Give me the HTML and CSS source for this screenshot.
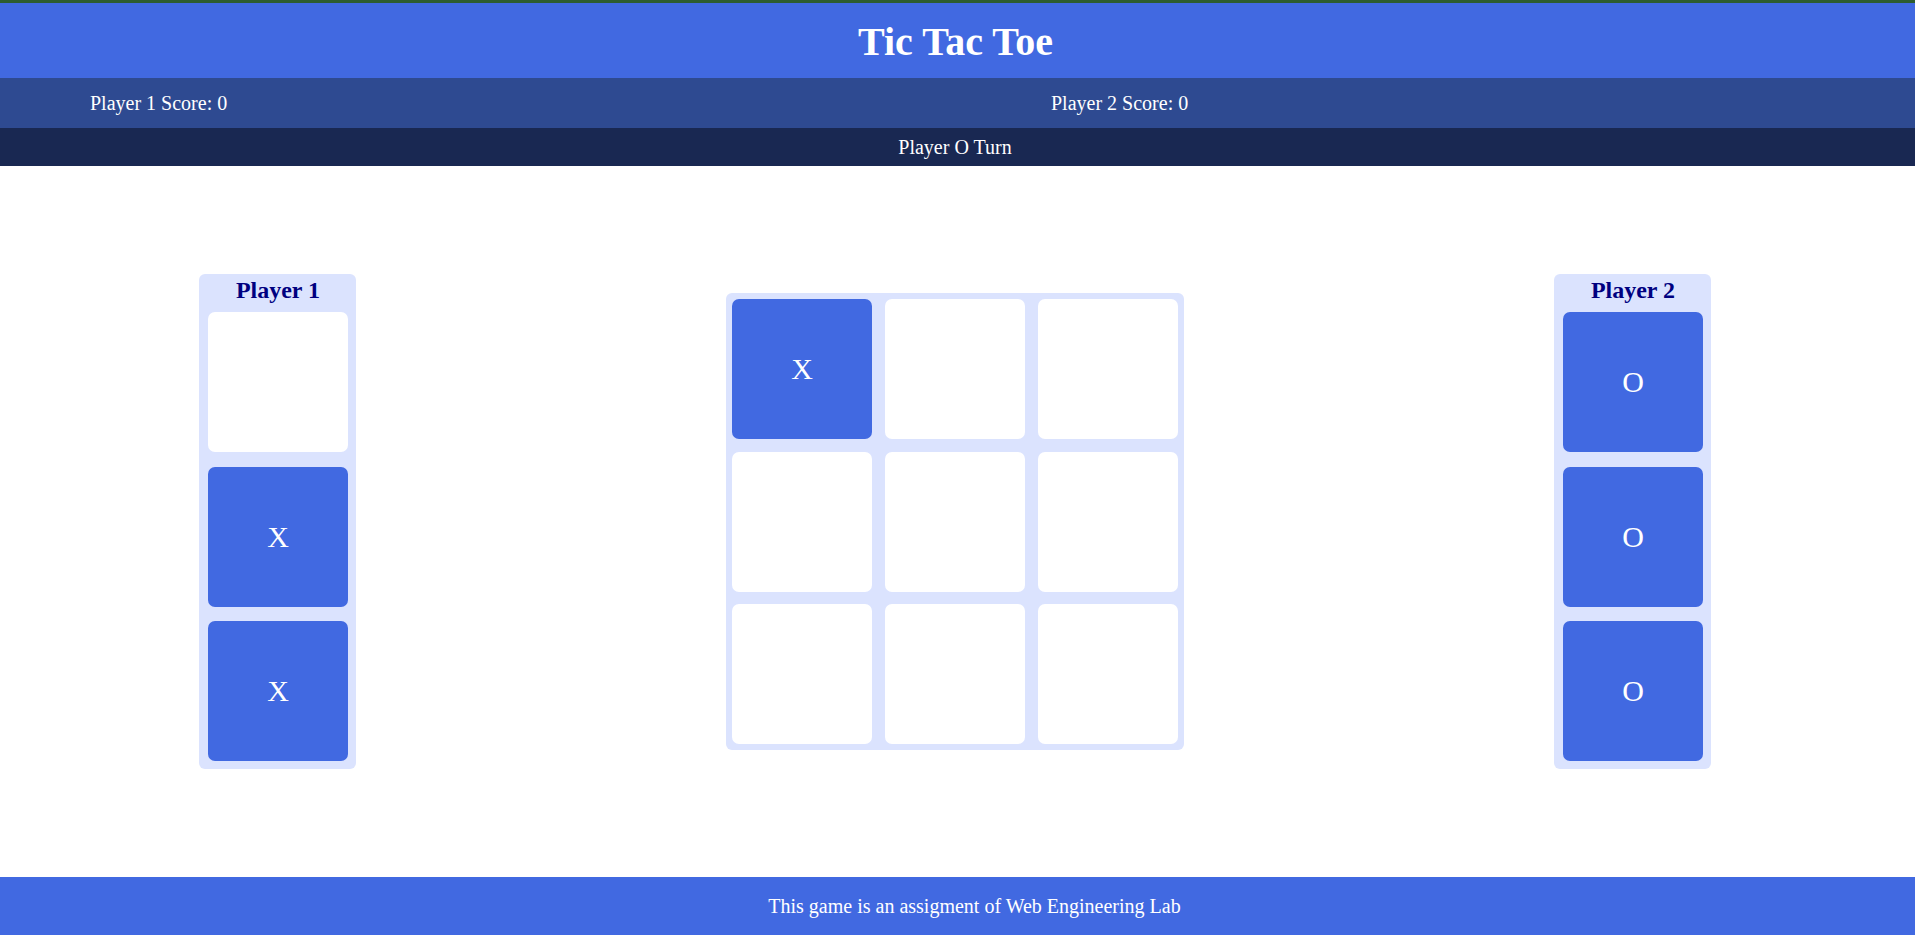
FILE: index.html
```html
<!DOCTYPE html>
<html lang="en">
<head>
<meta charset="utf-8">
<title>Tic Tac Toe</title>
<link rel="stylesheet" href="styles.css">
</head>
<body>
<header class="top">
  <h1 class="title">Tic Tac Toe</h1>
</header>
<div class="scores">
  <span class="score">Player 1 Score: 0</span>
  <span class="score">Player 2 Score: 0</span>
</div>
<div class="turn">Player O Turn</div>
<main class="arena">
  <section class="panel">
    <h2 class="panel-title">Player 1</h2>
    <div class="piece"></div>
    <div class="piece filled">X</div>
    <div class="piece filled">X</div>
  </section>
  <section class="board">
    <div class="cell filled">X</div>
    <div class="cell"></div>
    <div class="cell"></div>
    <div class="cell"></div>
    <div class="cell"></div>
    <div class="cell"></div>
    <div class="cell"></div>
    <div class="cell"></div>
    <div class="cell"></div>
  </section>
  <section class="panel">
    <h2 class="panel-title">Player 2</h2>
    <div class="piece filled">O</div>
    <div class="piece filled">O</div>
    <div class="piece filled">O</div>
  </section>
</main>
<footer class="foot">This game is an assigment of Web Engineering Lab</footer>
</body>
</html>
```
FILE: styles.css
```css
* { box-sizing: border-box; }
html, body { margin: 0; padding: 0; }
body {
  font-family: "Liberation Serif", "Times New Roman", serif;
  color: #fff;
  background: #fff;
  min-height: 100vh;
  display: flex;
  flex-direction: column;
}
.top {
  background: #4169e1;
  border-top: 3px solid #2d5d2f;
  height: 78px;
  display: flex;
  align-items: center;
  justify-content: center;
  padding-right: 4px;
}
.title {
  margin: 0;
  font-size: 40px;
  font-weight: bold;
  line-height: 75px;
  padding-top: 2px;
}
.scores {
  background: #2e4a91;
  height: 50px;
  display: grid;
  grid-template-columns: 961px 1fr;
  align-items: center;
  padding-left: 90px;
  font-size: 20px;
}
.turn {
  background: #192852;
  height: 38px;
  line-height: 38px;
  text-align: center;
  font-size: 20px;
  padding-right: 5px;
}
.arena {
  flex: 1;
  display: flex;
  align-items: center;
  gap: 370px;
  padding-left: 199px;
}
.panel {
  width: 157px;
  background: #dbe3fe;
  border-radius: 6px;
  padding: 0 8px 8px 9px;
  display: flex;
  flex-direction: column;
  gap: 14.5px;
}
.panel-title {
  margin: 0 0 -7px;
  padding-top: 1px;
  font-size: 24px;
  line-height: 30px;
  font-weight: bold;
  color: #000080;
  text-align: center;
}
.piece, .cell {
  width: 140px;
  height: 140px;
  background: #fff;
  border-radius: 7px;
  display: flex;
  align-items: center;
  justify-content: center;
  font-size: 30px;
  color: #fff;
}
.filled { background: #4169e1; }
.board {
  background: #dbe3fe;
  border-radius: 6px;
  padding: 6px;
  display: grid;
  grid-template-columns: repeat(3, 140px);
  column-gap: 13px;
  row-gap: 12.5px;
}
.foot {
  background: #4169e1;
  height: 58px;
  line-height: 58px;
  text-align: center;
  font-size: 20px;
  padding-left: 34px;
}
```
